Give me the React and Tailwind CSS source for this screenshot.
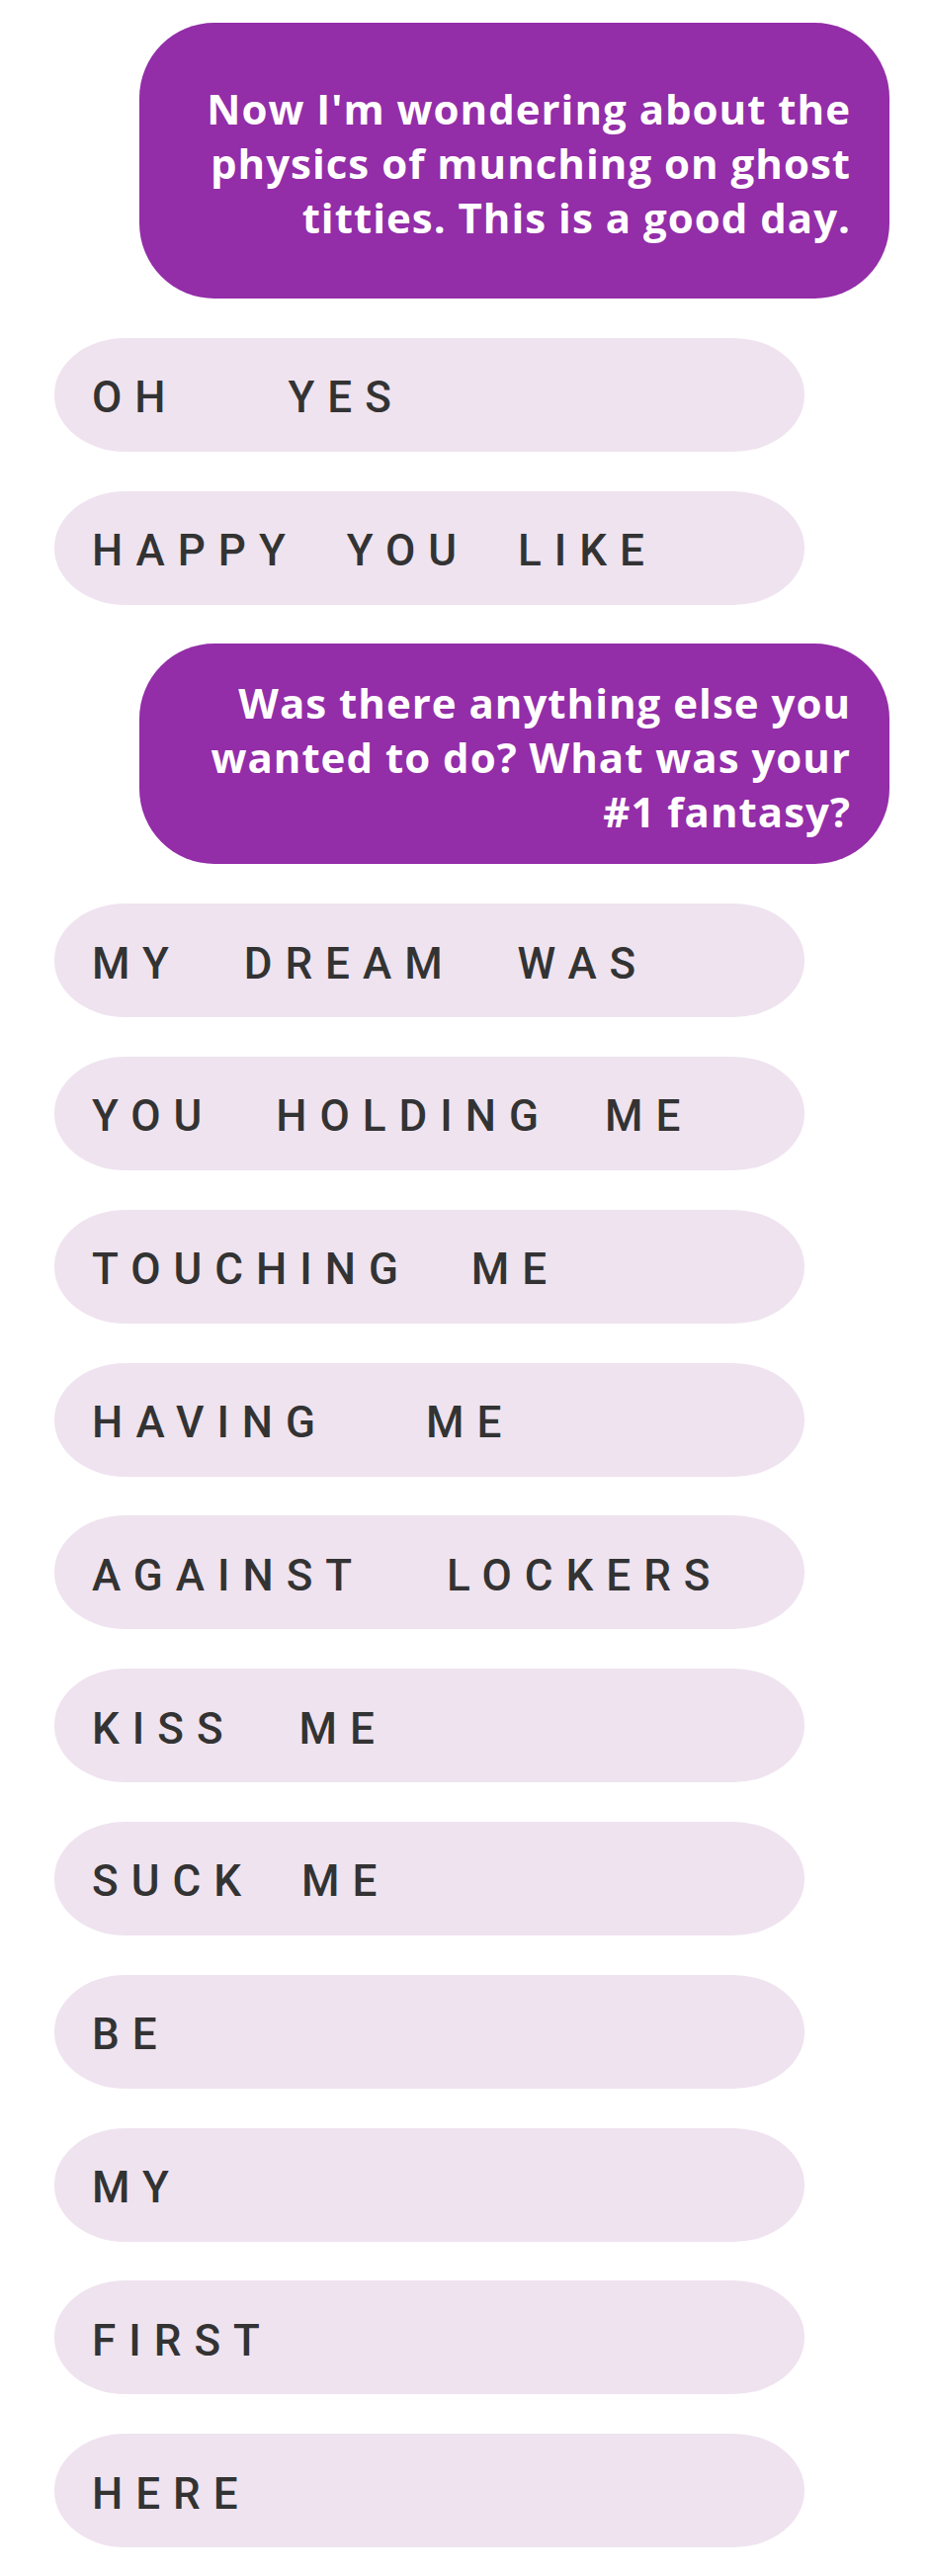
const MESSAGES = [
  {
    from: "me",
    lines: ["Now I'm wondering about the", "physics of munching on ghost", "titties. This is a good day."],
    pad: "pt-[59px] pb-[55px]",
  },
  { from: "them", words: ["OH", "YES"], gaps: [125] },
  { from: "them", words: ["HAPPY", "YOU", "LIKE"], gaps: [63, 63] },
  {
    from: "me",
    lines: ["Was there anything else you", "wanted to do? What was your", "#1 fantasy?"],
    pad: "pt-[32px] pb-[26px]",
  },
  { from: "them", words: ["MY", "DREAM", "WAS"], gaps: [77, 77] },
  { from: "them", words: ["YOU", "HOLDING", "ME"], gaps: [76, 68] },
  { from: "them", words: ["TOUCHING", "ME"], gaps: [75] },
  { from: "them", words: ["HAVING", "ME"], gaps: [113] },
  { from: "them", words: ["AGAINST", "LOCKERS"], gaps: [98] },
  { from: "them", words: ["KISS", "ME"], gaps: [78] },
  { from: "them", words: ["SUCK", "ME"], gaps: [62] },
  { from: "them", words: ["BE"], gaps: [] },
  { from: "them", words: ["MY"], gaps: [] },
  { from: "them", words: ["FIRST"], gaps: [] },
  { from: "them", words: ["HERE"], gaps: [] },
];

function MyBubble({ lines, pad }) {
  return (
    <div className="flex justify-end pr-[40px]">
      <div
        className={`w-[759px] rounded-[76px] bg-[#932da8] pr-[39px] text-right font-['Open_Sans',sans-serif] text-[42px] font-bold leading-[55px] tracking-[1px] text-white ${pad}`}
      >
        {lines.map((l, i) => (
          <div key={i}>{l}</div>
        ))}
      </div>
    </div>
  );
}

function TheirBubble({ words, gaps }) {
  return (
    <div className="flex pl-[55px]">
      <div className="flex h-[115px] w-[759px] items-center rounded-[72px/57px] bg-[#efe3ef] pl-[38px] pt-[6px]">
        <p className="whitespace-pre font-['Roboto',sans-serif] text-[44px] font-medium leading-none tracking-[13px] text-[#333333]">
          {words.map((w, i) => (
            <span key={i}>
              {i > 0 && " "}
              <span style={i > 0 ? { marginLeft: gaps[i - 1] - 38 } : undefined}>{w}</span>
            </span>
          ))}
        </p>
      </div>
    </div>
  );
}

export default function App() {
  return (
    <div className="flex min-h-[2606px] w-[940px] flex-col gap-[39.8px] bg-white pt-[23px] pb-[29px]">
      {MESSAGES.map((m, i) =>
        m.from === "me" ? (
          <MyBubble key={i} lines={m.lines} pad={m.pad} />
        ) : (
          <TheirBubble key={i} words={m.words} gaps={m.gaps} />
        )
      )}
    </div>
  );
}
